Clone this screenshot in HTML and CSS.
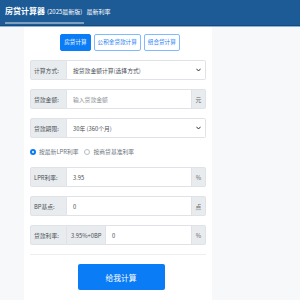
FILE: index.html
```html
<!DOCTYPE html>
<html lang="zh">
<head>
<meta charset="utf-8">
<link rel="stylesheet" href="styles.css">
</head>
<body>
<header class="topbar">
  <div class="brand">
    <span class="brand-name">房贷计算器</span><span class="brand-ver">(2025最新版)</span>
  </div>
  <a class="nav-link">最新利率</a>
</header>
<main class="page">
  <section class="card">
    <div class="tabs">
      <span class="tab active">房贷计算</span>
      <span class="tab">公积金贷款计算</span>
      <span class="tab">组合贷计算</span>
    </div>
    <div class="form">
      <div class="row">
        <span class="addon label">计算方式:</span>
        <div class="field select"><span>按贷款金额计算(选择方式)</span><svg class="caret" viewBox="0 0 6 4" width="5" height="4"><path d="M0.5 0.5 L3 3.2 L5.5 0.5" fill="none" stroke="#333" stroke-width="1.2"/></svg></div>
      </div>
      <div class="row">
        <span class="addon label">贷款金额:</span>
        <div class="field placeholder">输入贷款金额</div>
        <span class="addon suffix">元</span>
      </div>
      <div class="row">
        <span class="addon label">贷款期限:</span>
        <div class="field select"><span>30年 (360个月)</span><svg class="caret" viewBox="0 0 6 4" width="5" height="4"><path d="M0.5 0.5 L3 3.2 L5.5 0.5" fill="none" stroke="#333" stroke-width="1.2"/></svg></div>
      </div>
      <div class="radios">
        <label class="radio"><span class="dot on"></span>按最新LPR利率</label>
        <label class="radio"><span class="dot"></span>按商贷基准利率</label>
      </div>
      <div class="row">
        <span class="addon label">LPR利率:</span>
        <div class="field">3.95</div>
        <span class="addon suffix">%</span>
      </div>
      <div class="row">
        <span class="addon label">BP基点:</span>
        <div class="field">0</div>
        <span class="addon suffix">点</span>
      </div>
      <div class="row">
        <span class="addon label">贷款利率:</span>
        <span class="addon mid">3.95%+0BP</span>
        <div class="field">0</div>
        <span class="addon suffix">%</span>
      </div>
      <hr class="sep">
      <div class="actions">
        <button class="btn">给我计算</button>
      </div>
    </div>
  </section>
</main>
</body>
</html>
```
FILE: styles.css
```css
* { box-sizing: border-box; }
html, body {
  margin: 0;
  padding: 0;
  width: 300px;
  height: 300px;
  overflow: hidden;
  background: #f7f8fa;
  font-family: "Noto Sans CJK SC", "Noto Sans", sans-serif;
}
.topbar {
  height: 26px;
  background: #1d5b97;
  border-bottom: 1px solid #154a80;
  box-shadow: 0 1px 0 #8fb3d6;
  display: flex;
  align-items: flex-start;
  padding-left: 5px;
}
.brand {
  display: flex;
  align-items: baseline;
  height: 24px;
  padding-top: 5px;
  border-bottom: 2px solid #7f9fbf;
  padding-right: 2px;
}
.brand-name {
  color: #fff;
  font-weight: bold;
  font-size: 8px;
  line-height: 12px;
}
.brand-ver {
  color: #fff;
  font-size: 6px;
  margin-left: 2px;
}
.nav-link {
  color: #fff;
  font-size: 6px;
  line-height: 12px;
  margin-top: 6px;
  margin-left: 2px;
}
.page {
  display: flex;
  padding-left: 24px;
  padding-top: 1px;
}
.card {
  width: 188px;
  height: 280px;
  background: #fff;
  padding: 7px 6px 0;
}
.tabs {
  display: flex;
  justify-content: center;
  gap: 3px;
  margin-left: 4px;
}
.tab {
  height: 17px;
  padding: 0 3px;
  border: 1px solid #80bbff;
  border-radius: 2px;
  color: #1a7ef2;
  font-size: 5.6px;
  line-height: 15px;
  background: #fff;
}
.tab.active {
  background: #0a7cf5;
  border-color: #0a7cf5;
  color: #fff;
}
.form {
  margin-top: 9px;
  display: flex;
  flex-direction: column;
}
.row {
  display: flex;
  height: 20px;
  margin-bottom: 9px;
  font-size: 5.8px;
  color: #495057;
}
.addon {
  display: flex;
  align-items: center;
  background: #e9ecef;
  border: 1px solid #dfe3e7;
}
.label {
  width: 37px;
  padding-left: 3px;
  border-radius: 2px 0 0 2px;
}
.mid {
  width: 39px;
  padding-left: 4px;
  border-left: none;
}
.suffix {
  width: 14px;
  justify-content: center;
  border-left: none;
  border-radius: 0 2px 2px 0;
  color: #666;
}
.field {
  flex: 1;
  display: flex;
  align-items: center;
  justify-content: space-between;
  padding: 0 4px 0 6px;
  border: 1px solid #dfe3e7;
  border-left: none;
  color: #495057;
}
.field.select { border-radius: 0 2px 2px 0; }
.placeholder { color: #8a9096; }
.caret { display: block; }
.radios {
  display: flex;
  align-items: center;
  gap: 6px;
  height: 13px;
  margin-top: -2px;
  margin-bottom: 9px;
  font-size: 5.8px;
  color: #6c757d;
}
.radio {
  display: flex;
  align-items: center;
  gap: 3px;
}
.dot {
  width: 6px;
  height: 6px;
  border-radius: 50%;
  border: 1px solid #b8bec4;
  background: #fff;
}
.dot.on {
  border: 2px solid #0a7cf5;
  background: #fff;
}
.sep {
  margin: 0;
  border: none;
  border-top: 1px solid #eceef0;
}
.actions {
  display: flex;
  justify-content: center;
  padding-top: 9px;
}
.btn {
  width: 87px;
  height: 26px;
  margin-left: 6px;
  border: none;
  border-radius: 2px;
  background: #0a7cf5;
  color: #fff;
  font-family: inherit;
  font-size: 7.8px;
}
```
